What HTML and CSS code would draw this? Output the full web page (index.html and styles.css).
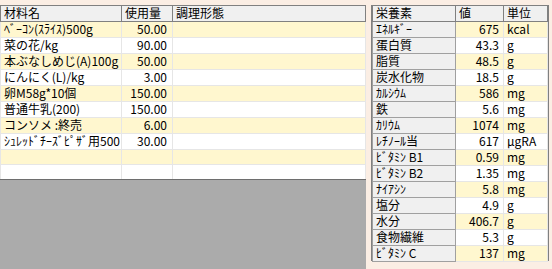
FILE: index.html
```html
<!DOCTYPE html>
<html lang="ja">
<head>
  <meta charset="UTF-8">
  <title>栄養計算</title>
  <link rel="stylesheet" href="styles.css">
</head>
<body>
  <div class="screen">
    <div class="materials">
      <table class="grid">
        <colgroup><col class="c-name"><col class="c-qty"><col class="c-cook"></colgroup>
        <thead>
          <tr><th>材料名</th><th>使用量</th><th>調理形態</th></tr>
        </thead>
        <tbody>
          <tr class="odd"><td>ﾍﾞｰｺﾝ(ｽﾗｲｽ)500g</td><td class="num">50.00</td><td></td></tr>
          <tr><td>菜の花/kg</td><td class="num">90.00</td><td></td></tr>
          <tr class="odd"><td>本ぶなしめじ(A)100g</td><td class="num">50.00</td><td></td></tr>
          <tr><td>にんにく(L)/kg</td><td class="num">3.00</td><td></td></tr>
          <tr class="odd"><td>卵M58g*10個</td><td class="num">150.00</td><td></td></tr>
          <tr><td>普通牛乳(200)</td><td class="num">150.00</td><td></td></tr>
          <tr class="odd"><td>コンソメ :終売</td><td class="num">6.00</td><td></td></tr>
          <tr><td>ｼｭﾚｯﾄﾞﾁｰｽﾞﾋﾟｻﾞ用500</td><td class="num">30.00</td><td></td></tr>
          <tr class="odd"><td></td><td></td><td></td></tr>
          <tr class="last"><td></td><td></td><td></td></tr>
        </tbody>
      </table>
    </div>
    <div class="nutrients">
      <table class="grid">
        <colgroup><col class="c-label"><col class="c-val"><col class="c-unit"></colgroup>
        <thead>
          <tr><th>栄養素</th><th>値</th><th>単位</th></tr>
        </thead>
        <tbody>
          <tr class="odd"><th>ｴﾈﾙｷﾞｰ</th><td class="num">675</td><td>kcal</td></tr>
          <tr><th>蛋白質</th><td class="num">43.3</td><td>g</td></tr>
          <tr class="odd"><th>脂質</th><td class="num">48.5</td><td>g</td></tr>
          <tr><th>炭水化物</th><td class="num">18.5</td><td>g</td></tr>
          <tr class="odd"><th>ｶﾙｼｳﾑ</th><td class="num">586</td><td>mg</td></tr>
          <tr><th>鉄</th><td class="num">5.6</td><td>mg</td></tr>
          <tr class="odd"><th>ｶﾘｳﾑ</th><td class="num">1074</td><td>mg</td></tr>
          <tr><th>ﾚﾁﾉｰﾙ当</th><td class="num">617</td><td>μgRA</td></tr>
          <tr class="odd"><th>ﾋﾞﾀﾐﾝ B1</th><td class="num">0.59</td><td>mg</td></tr>
          <tr><th>ﾋﾞﾀﾐﾝ B2</th><td class="num">1.35</td><td>mg</td></tr>
          <tr class="odd"><th>ﾅｲｱｼﾝ</th><td class="num">5.8</td><td>mg</td></tr>
          <tr><th>塩分</th><td class="num">4.9</td><td>g</td></tr>
          <tr class="odd"><th>水分</th><td class="num">406.7</td><td>g</td></tr>
          <tr><th>食物繊維</th><td class="num">5.3</td><td>g</td></tr>
          <tr class="odd"><th>ﾋﾞﾀﾐﾝ C</th><td class="num">137</td><td>mg</td></tr>
        </tbody>
      </table>
    </div>
  </div>
</body>
</html>
```

FILE: styles.css
```css
html, body {
  margin: 0;
  height: 100%;
  background: #fbeee4;
}
body {
  font-family: "Noto Sans CJK JP", "Liberation Sans", sans-serif;
  font-size: 12px;
  color: #000;
}
.screen {
  display: flex;
  gap: 5px;
  padding-top: 5px;
  height: 264px;
}

/* common grid */
.grid {
  border-collapse: collapse;
  table-layout: fixed;
}
.grid th,
.grid td {
  height: 15px;
  padding: 0 3px 1px;
  line-height: 14px;
  white-space: nowrap;
  font-weight: normal;
  text-align: left;
  box-sizing: border-box;
}
.grid thead th {
  background: #f0f0f0;
  border: 1px solid #808080;
}
.grid tbody td {
  background: #fff;
  border: 1px solid #e6e6e6;
}
.grid tbody tr.odd td {
  background: #fff7cf;
}
.grid td.num {
  text-align: right;
  padding-right: 5px;
}

/* left : materials */
.materials {
  width: 366px;
  background: #ababab;
}
.materials .grid {
  width: 366px;
}
.materials .c-name { width: 121px; }
.materials .c-qty { width: 51px; }
.materials .grid tbody tr.last td {
  border-bottom: 1px solid #6e6e6e;
}

/* right : nutrients */
.nutrients {
  width: 178px;
  height: 256px;
  border: 1px solid #808080;
  box-sizing: border-box;
  background: #fff;
}
.nutrients .grid {
  width: 176px;
}
.nutrients .c-label { width: 83px; }
.nutrients .c-val { width: 48px; }
.nutrients thead th {
  border-top: 0;
}
.nutrients tbody th {
  background: #f0f0f0;
  border: 1px solid #a0a0a0;
}
.nutrients td.num {
  padding-right: 4px;
}
```
